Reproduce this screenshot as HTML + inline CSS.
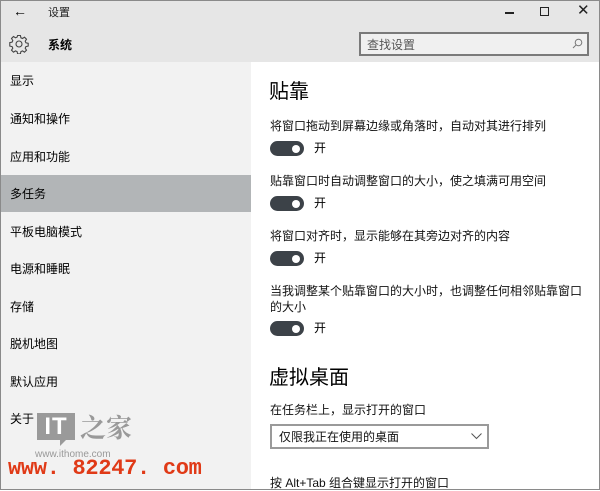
<!DOCTYPE html>
<html><head><meta charset="utf-8"><style>
*{margin:0;padding:0;box-sizing:border-box}
body{width:600px;height:490px;overflow:hidden;background:#fff;font-family:"Liberation Sans","Noto Sans CJK SC",sans-serif;color:#000;position:relative}
.abs{position:absolute}
.frame{position:absolute;left:0;top:0;width:600px;height:490px;border:1px solid #8a8a8a;pointer-events:none;z-index:10}
.top{left:0;top:0;width:600px;height:62px;background:#e6e6e6}
.side{left:0;top:62px;width:251px;height:428px;background:#f2f2f2}
.item{position:absolute;left:10px;font-size:12px;line-height:16px}
.sel{left:0;top:175px;width:251px;height:37px;background:#b2b5b7}
.txt{position:absolute;left:270px;font-size:12px;line-height:16px;color:#111}
.h{position:absolute;left:269px;font-size:20px;line-height:24px}
.tg{position:absolute;left:270px;width:34px;height:15px;border-radius:8px;background:#3c4248}
.tg::after{content:"";position:absolute;right:4px;top:3.5px;width:8px;height:8px;border-radius:50%;background:#fff}
.on{position:absolute;left:314px;font-size:12px;line-height:16px}
</style></head><body>
<div class="abs top"></div>
<div class="abs" style="left:13px;top:3px;font-size:14px">&#8592;</div>
<div class="abs" style="left:48px;top:4px;font-size:11px;color:#222">设置</div>
<svg class="abs" style="left:9px;top:34px" width="20" height="20" viewBox="0 0 20 20"><g fill="none" stroke="#444" stroke-width="1.1"><circle cx="10" cy="10" r="3"/><path d="M8.6 1.5h2.8l.5 2.3 1.6.7 2-1.3 2 2-1.3 2 .7 1.6 2.3.5v2.8l-2.3.5-.7 1.6 1.3 2-2 2-2-1.3-1.6.7-.5 2.3H8.6l-.5-2.3-1.6-.7-2 1.3-2-2 1.3-2-.7-1.6-2.3-.5V8.6l2.3-.5.7-1.6-1.3-2 2-2 2 1.3 1.6-.7z"/></g></svg>
<div class="abs" style="left:48px;top:36px;font-size:12px;font-weight:bold">系统</div>
<div class="abs" style="left:505px;top:12px;width:9px;height:1.5px;background:#222"></div>
<div class="abs" style="left:540px;top:7px;width:9px;height:9px;border:1.3px solid #222"></div>
<div class="abs" style="left:577px;top:1px;font-size:15px;color:#222">&#10005;</div>
<div class="abs" style="left:359px;top:32px;width:230px;height:24px;border:2px solid #7a7a7a;background:#f0f0f0"></div>
<div class="abs" style="left:367px;top:36px;font-size:12px;color:#555">查找设置</div>
<svg class="abs" style="left:572px;top:38px" width="11" height="11" viewBox="0 0 11 11"><g fill="none" stroke="#777" stroke-width="1"><circle cx="6.5" cy="4.5" r="3.3"/><path d="M4.2 6.8L1 10"/></g></svg>
<div class="abs side"></div>
<div class="abs sel"></div>
<div class="item" style="top:73px">显示</div>
<div class="item" style="top:111px">通知和操作</div>
<div class="item" style="top:149px">应用和功能</div>
<div class="item" style="top:186px">多任务</div>
<div class="item" style="top:224px">平板电脑模式</div>
<div class="item" style="top:261px">电源和睡眠</div>
<div class="item" style="top:299px">存储</div>
<div class="item" style="top:336px">脱机地图</div>
<div class="item" style="top:374px">默认应用</div>
<div class="item" style="top:411px">关于</div>
<div class="abs" style="left:37px;top:413px;width:38px;height:27px;background:#9a9a9a;color:#fff;font-weight:bold;font-size:24px;line-height:27px;text-align:center;letter-spacing:1px">IT</div>
<div class="abs" style="left:60px;top:440px;width:0;height:0;border-left:6px solid #9a9a9a;border-bottom:6px solid transparent"></div>
<div class="abs" style="left:80px;top:412px;font-size:26px;color:#999;font-weight:bold;font-family:'Noto Serif CJK SC',serif;line-height:30px">之家</div>
<div class="abs" style="left:35px;top:449px;font-size:10px;color:#999">www.ithome.com</div>
<div class="abs" style="left:8px;top:456px;font-size:22px;font-weight:bold;color:#e03a17;font-family:'Liberation Mono',monospace;line-height:26px;letter-spacing:-0.3px">www. 82247. com</div>
<div class="h" style="top:80px">贴靠</div>
<div class="txt" style="top:118px">将窗口拖动到屏幕边缘或角落时，自动对其进行排列</div>
<div class="tg" style="top:141px"></div><div class="on" style="top:140px">开</div>
<div class="txt" style="top:173px">贴靠窗口时自动调整窗口的大小，使之填满可用空间</div>
<div class="tg" style="top:196px"></div><div class="on" style="top:195px">开</div>
<div class="txt" style="top:228px">将窗口对齐时，显示能够在其旁边对齐的内容</div>
<div class="tg" style="top:251px"></div><div class="on" style="top:250px">开</div>
<div class="txt" style="top:283px;width:320px">当我调整某个贴靠窗口的大小时，也调整任何相邻贴靠窗口的大小</div>
<div class="tg" style="top:321px"></div><div class="on" style="top:320px">开</div>
<div class="h" style="top:366px">虚拟桌面</div>
<div class="txt" style="top:402px">在任务栏上，显示打开的窗口</div>
<div class="abs" style="left:270px;top:424px;width:219px;height:25px;border:2px solid #9a9a9a;background:#fff"></div>
<div class="txt" style="left:279px;top:429px">仅限我正在使用的桌面</div>
<svg class="abs" style="left:471px;top:433px" width="11" height="7" viewBox="0 0 11 7"><path d="M.5 .5L5.5 5.5 10.5 .5" fill="none" stroke="#555"/></svg>
<div class="txt" style="top:475px">按 Alt+Tab 组合键显示打开的窗口</div>
<div class="frame"></div>
</body></html>
